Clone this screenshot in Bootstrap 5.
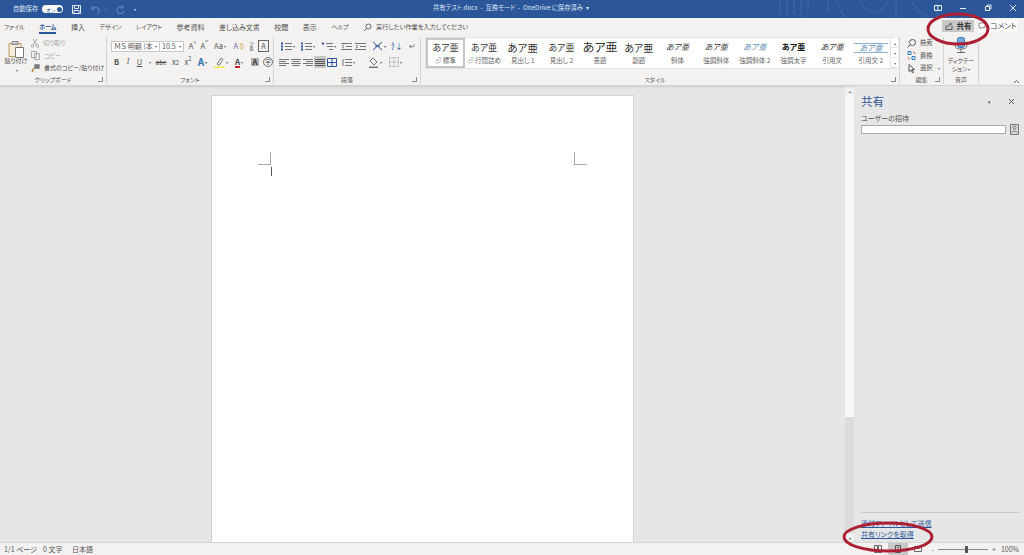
<!DOCTYPE html>
<html lang="ja">
<head>
<meta charset="UTF-8">
<title>共有テスト.docx - Word</title>
<link href="https://cdn.jsdelivr.net/npm/bootstrap@5.3.0/dist/css/bootstrap.min.css" rel="stylesheet">
<style>
html, body { height: 555px; overflow: hidden; }
body { width: 1024px; position: relative; font-family: "Noto Sans CJK JP", "Liberation Sans", sans-serif; font-feature-settings: "palt"; font-size: 7px; line-height: 1; color: #505050; background: #e6e6e6; }
svg { display: block; flex: none; }

.titlebar { height: 18px; background: #2b579a; color: #dfe7f3; font-size: 6.3px; position: relative; }
.titlebar .deco { position: absolute; left: 760px; top: 0; }
.titlebar .qat { width: 330px; padding-left: 13px; }
.autosave { width: 21px; height: 8px; border-radius: 4px; background: #fff; color: #2b579a; font-size: 5px; padding: 0 1px 0 4px; }
.autosave i { width: 5px; height: 5px; border-radius: 50%; background: #2b579a; }
.doc-title { position: absolute; left: 433px; top: 5px; white-space: nowrap; }
.win-btns { position: absolute; left: 933px; top: 3px; }
.win-btns div { width: 25px; }

.tabs { height: 18px; background: #f3f2f1; padding-left: 4px; }
.tabs span { margin-right: 14.5px; white-space: nowrap; }
.tabs .kana { font-size: 6px; }
.tabs .search-text { font-size: 6.2px; }
.tabs .active { color: #2b579a; font-weight: 700; position: relative; }
.tabs .active::after { content: ""; position: absolute; left: 0; right: 0; bottom: -4px; height: 2px; background: #2b579a; }
.btn-share { position: absolute; left: 942px; top: 20px; width: 32px; height: 12px; background: #c8c8c8; color: #333; font-weight: 700; font-size: 7.5px; white-space: nowrap; }
.btn-comment { position: absolute; left: 978px; top: 20px; width: 39px; height: 12px; background: #fff; color: #444; font-size: 7.5px; white-space: nowrap; }

.ribbon { height: 50px; background: #f3f2f1; border-bottom: 1px solid #d2d2d2; box-shadow: 0 1px 2px rgba(0,0,0,.12); position: relative; }
.rgroup { height: 47px; margin-top: 1px; border-right: 1px solid #d6d4d2; position: relative; padding-top: 3px; flex: none; }
.rgroup .glabel { position: absolute; left: 0; right: 0; bottom: 1px; text-align: center; font-size: 6px; color: #555; white-space: nowrap; }
.launcher { position: absolute; right: 3px; bottom: 2px; width: 5px; height: 5px; border-right: 1px solid #888; border-bottom: 1px solid #888; }
.irow { height: 12px; margin-bottom: 4px; align-items: center; }
.cell { display: flex; align-items: center; justify-content: center; flex: none; height: 12px; font-size: 7.5px; }
.caret { font-size: 4px; color: #666; margin-left: 1px; }
.selbox { height: 11px; background: #fff; border: 1px solid #c8c8c8; justify-content: space-between; padding: 0 2px; font-size: 7px; color: #555; }
.stack { font-size: 4.5px; line-height: 1; text-align: center; }
.muted { color: #a5a5a5; }
.clip { font-size: 6px; }
.clip-row { height: 12.5px; white-space: nowrap; }
.edit-row { height: 12.5px; white-space: nowrap; font-size: 6.3px; }

.gallery { position: absolute; left: 4px; top: 0; width: 470px; height: 32px; background: #fff; border: 1px solid #e2e2e2; }
.style-item { width: 38.7px; height: 30px; text-align: center; flex: none; padding-top: 5px; }
.style-item b { display: block; font-weight: 400; font-size: 9px; color: #333; height: 14px; white-space: nowrap; }
.style-item small { display: block; font-size: 6.5px; color: #666; white-space: nowrap; }
.style-item.sel { outline: 2px solid #c6c6c6; outline-offset: -2px; }
.gscroll { width: 8px; height: 10px; border-left: 1px solid #e2e2e2; border-bottom: 1px solid #e2e2e2; font-size: 4px; color: #666; background: #fff; }

.main { height: 456px; background: #e6e6e6; }
.doc-area { width: 845px; height: 456px; padding: 9px 0 0 211px; flex: none; overflow: hidden; }
.page { width: 423px; height: 460px; background: #fff; border: 1px solid #d4d4d4; padding: 56px 46px 0; }
.crop { width: 13px; height: 13px; border-bottom: 1px solid #a8a8a8; }
.crop.l { border-right: 1px solid #a8a8a8; }
.crop.r { border-left: 1px solid #a8a8a8; }
.caret-mark { width: 1px; height: 9px; background: #555; margin: 2px 0 0 13px; }
.vscroll { width: 9px; height: 456px; background: #dcdcdc; flex: none; }
.vscroll .thumb { height: 322px; background: #f8f8f8; }
.vscroll .arrow { height: 9px; background: #f0f0f0; color: #555; font-size: 4px; }
.pane { width: 170px; height: 456px; padding: 9px 4px 0 7px; flex: none; position: relative; background: #e6e6e6; }
.pane h2 { font-size: 11.5px; font-weight: 400; color: #2b579a; margin: 0; }
.pane .inv { height: 9px; width: 145px; background: #fff; border: 1px solid #aaa; }
.pane .foot { position: absolute; left: 7px; right: 4px; bottom: 0; border-top: 1px solid #c8c8c8; padding-top: 7px; }
.pane a { display: block; color: #2b579a; font-size: 7px; margin-bottom: 4px; }

.statusbar { height: 13px; background: #f3f2f1; border-top: 1px solid #d4d4d4; padding-left: 4px; font-size: 7px; color: #555; position: relative; }
.view-btn { width: 20px; height: 12px; }
.view-btn.on { background: #c8c8c8; }
.zoom-track { width: 50px; height: 1px; background: #888; position: relative; }
.zoom-track i { position: absolute; left: 27px; top: -3px; width: 3px; height: 7px; background: #555; }
.callouts { position: absolute; left: 0; top: 0; pointer-events: none; }
</style>
</head>
<body>

<!-- タイトルバー -->
<div class="titlebar d-flex align-items-center">
    <svg class="deco" width="200" height="18" fill="none" stroke="#34609f" stroke-width="2">
        <path d="M20 0v14M27 0v16M34 0v14M41 0v17M48 0v12M68 0v12M76 0l8 17M100 0c4 16 24 16 28 0M136 0v17M152 0c2 8 8 14 16 16M178 0c-3 8-3 12 2 18"/>
    </svg>
    <div class="qat d-flex align-items-center">
        <span class="me-1">自動保存</span>
        <span class="autosave d-flex align-items-center justify-content-between">オン<i></i></span>
        <svg class="ms-2" width="11" height="11" fill="none" stroke="#dfe7f3"><path d="M1.500 1.500h8v8h-8zM3.500 1.500v3h4v-3M3 9.500v-3h5v3"/></svg>
        <svg class="ms-2" width="11" height="11" fill="none" stroke="#5f82b6" stroke-width="1.200"><path d="M2 2v3h3M2 5c2-3 7-2 7 2 0 1-.5 2-1.500 2.500"/></svg>
        <span class="ms-1" style="color:#5f82b6;font-size:4px">▾</span>
        <svg class="ms-2" width="11" height="11" fill="none" stroke="#5f82b6" stroke-width="1.200"><path d="M8 1v3H5M8.500 4a3.500 3.500 0 1 0 .5 3"/></svg>
        <span class="ms-2" style="font-size:4px">▾</span>
    </div>
    <span class="doc-title">共有テスト.docx &nbsp;-&nbsp; 互換モード &nbsp;-&nbsp; OneDrive に保存済み &nbsp;▾</span>
    <div class="win-btns d-flex">
        <div><svg width="10" height="10" fill="none" stroke="#e8eef7"><path d="M1.500 2.500h7v5h-7zM5 2.500v5"/></svg></div>
        <div><svg width="10" height="10" stroke="#e8eef7"><path d="M2 5.500h6"/></svg></div>
        <div><svg width="10" height="10" fill="none" stroke="#e8eef7"><path d="M2.500 3.500h4v4h-4zM4 3.500v-1.500h4v4h-1.500"/></svg></div>
        <div><svg width="10" height="10" stroke="#e8eef7"><path d="M2 2l6 6M8 2l-6 6"/></svg></div>
    </div>
</div>

<!-- タブ -->
<div class="tabs d-flex align-items-center">
    <span class="kana">ファイル</span><span class="kana active">ホーム</span><span>挿入</span><span class="kana">デザイン</span><span class="kana">レイアウト</span><span>参考資料</span><span>差し込み文書</span><span>校閲</span><span>表示</span><span class="kana">ヘルプ</span>
    <svg width="9" height="9" fill="none" stroke="#666" class="me-1"><circle cx="5.500" cy="3.500" r="2.500"/><path d="M3.500 5.500L1 8"/></svg>
    <span class="search-text">実行したい作業を入力してください</span>
</div>
<div class="btn-share d-flex align-items-center justify-content-center gap-1">
    <svg width="8" height="8" fill="none" stroke="#555"><path d="M1 3.500v4h6v-4M3 5c0-2 1-3 3-3M5 .5L6.500 2 5 3.500"/></svg>共有
</div>
<div class="btn-comment d-flex align-items-center justify-content-center gap-1">
    <svg width="8" height="8" fill="none" stroke="#888"><path d="M1 1h6v4.500H4L2.500 7V5.500H1z"/></svg>コメント
</div>

<!-- リボン -->
<div class="ribbon d-flex">
    <!-- クリップボード -->
    <div class="rgroup clip d-flex" style="width:107px;padding-top:0">
        <div class="text-center" style="width:31px;padding:3px 0 0 1px;white-space:nowrap">
            <svg class="mx-auto" width="20" height="18" fill="none" stroke="#b89a62"><path d="M3 3.500h12v13H3z" fill="#f5ecd9"/><path d="M6 1.500h6v3H6z" fill="#ccc" stroke="#888"/><path d="M9.500 7.500h8v10h-8z" fill="#fff" stroke="#777"/></svg>
            <div>貼り付け</div>
            <div class="caret mt-1">▾</div>
        </div>
        <div>
            <div class="clip-row d-flex align-items-center gap-1 muted">
                <svg width="8" height="9" fill="none" stroke="#aaa"><path d="M2 0l4 6M6 0L2 6"/><circle cx="1.500" cy="7" r="1.300"/><circle cx="6.500" cy="7" r="1.300"/></svg>切り取り
            </div>
            <div class="clip-row d-flex align-items-center gap-1 muted">
                <svg width="9" height="9" fill="none" stroke="#aaa"><path d="M.5.500h5v6h-5zM3.500 2.500h5v6h-5z"/></svg>コピー
            </div>
            <div class="clip-row d-flex align-items-center gap-1">
                <svg width="9" height="9" fill="none" stroke="#b5822f" stroke-width="1.300"><path d="M1 8c1-3 2-4 4-5"/><path d="M4 1h4v3H4z" fill="#777" stroke="#777"/></svg>書式のコピー/貼り付け
            </div>
        </div>
        <div class="glabel">クリップボード</div><div class="launcher"></div>
    </div>

    <!-- フォント -->
    <div class="rgroup" style="width:167px;padding-left:4px">
        <div class="d-flex irow">
            <div class="cell selbox" style="width:49px;white-space:nowrap">ＭＳ 明朝 (本<span class="caret">▾</span></div>
            <div class="cell selbox" style="width:25px;margin-left:-1px">10.5<span class="caret">▾</span></div>
            <div class="cell" style="width:13px;margin-left:2px">A<sup>^</sup></div>
            <div class="cell" style="width:11px">A<sup>ˇ</sup></div>
            <div class="cell" style="width:20px">Aa<span class="caret">▾</span></div>
            <div class="cell" style="width:13px;color:#7a5ab0;margin-left:3px">A<span style="color:#c8a028">◊</span></div>
            <div class="cell" style="width:11px"><span class="stack">ア<br>亜</span></div>
            <div class="cell" style="width:13px"><span style="border:1px solid #666;padding:1px 2px">A</span></div>
        </div>
        <div class="d-flex irow">
            <div class="cell fw-bold" style="width:11px">B</div>
            <div class="cell fst-italic" style="width:12px;font-family:'Liberation Serif',serif">I</div>
            <div class="cell text-decoration-underline" style="width:11px">U</div>
            <div class="cell" style="width:8px"><span class="caret">▾</span></div>
            <div class="cell text-decoration-line-through" style="width:16px;font-size:6.500px">abc</div>
            <div class="cell" style="width:13px">x<sub>2</sub></div>
            <div class="cell" style="width:12px">x<sup>2</sup></div>
            <div class="cell fw-bold" style="width:17px;color:#2e75b6;font-size:10px">A<span class="caret">▾</span></div>
            <div class="cell" style="width:19px"><svg width="11" height="11" fill="none"><path d="M3 7l4-6 2 1.500-4 6z" stroke="#777"/><path d="M0 9.500h11V11H0z" fill="#f4e842"/></svg><span class="caret">▾</span></div>
            <div class="cell" style="width:18px"><span style="color:#444;font-size:8px;font-weight:700;border-bottom:2px solid #c8202c;line-height:9px">A</span><span class="caret">▾</span></div>
            <div class="cell" style="width:14px"><span style="background:#b0b0b0;color:#333;padding:0 2px;font-weight:700">A</span></div>
            <div class="cell" style="width:12px"><span style="border:1px solid #777;border-radius:50%;width:10px;height:10px;font-size:6px;display:flex;align-items:center;justify-content:center">字</span></div>
        </div>
        <div class="glabel">フォント</div><div class="launcher"></div>
    </div>

    <!-- 段落 -->
    <div class="rgroup" style="width:147px;padding-left:4px">
        <div class="d-flex irow">
            <div class="cell" style="width:20px"><svg width="11" height="9" stroke="#2b579a"><path d="M0 1.500h2M0 4.500h2M0 7.500h2" stroke-width="2"/><path d="M4 1.500h7M4 4.500h7M4 7.500h7" stroke="#777"/></svg><span class="caret">▾</span></div>
            <div class="cell" style="width:20px"><svg width="11" height="9" stroke="#2b579a"><path d="M0 1.500h2M0 4.500h2M0 7.500h2" stroke-width="2"/><path d="M4 1.500h7M4 4.500h7M4 7.500h7" stroke="#777"/></svg><span class="caret">▾</span></div>
            <div class="cell" style="width:21px"><svg width="11" height="9" stroke="#777"><path d="M0 1.500h2" stroke="#2b579a" stroke-width="2"/><path d="M4 1.500h7M5 4.500h6M7 7.500h4"/></svg><span class="caret">▾</span></div>
            <div class="cell" style="width:14px"><svg width="11" height="9" stroke="#777"><path d="M0 1.500h11M5 4.500h6M0 7.500h11M3 3L1 4.500 3 6" fill="none"/></svg></div>
            <div class="cell" style="width:15px"><svg width="11" height="9" stroke="#777"><path d="M0 1.500h11M5 4.500h6M0 7.500h11M1 3l2 1.500L1 6" fill="none"/></svg></div>
            <div class="cell" style="width:21px"><svg width="11" height="10" fill="none" stroke="#2b579a"><path d="M1 1l9 8M10 1L1 9M3 5h5"/></svg><span class="caret">▾</span></div>
            <div class="cell" style="width:16px;color:#2b579a"><span class="stack">A<br>Z</span><span style="margin-left:1px">↓</span></div>
            <div class="cell" style="width:14px;color:#666">↵</div>
        </div>
        <div class="d-flex irow">
            <div class="cell" style="width:12px"><svg width="10" height="9" stroke="#777"><path d="M0 1.500h10M0 3.500h7M0 5.500h10M0 7.500h7"/></svg></div>
            <div class="cell" style="width:12px"><svg width="10" height="9" stroke="#777"><path d="M0 1.500h10M1.500 3.500h7M0 5.500h10M1.500 7.500h7"/></svg></div>
            <div class="cell" style="width:12px"><svg width="10" height="9" stroke="#777"><path d="M0 1.500h10M3 3.500h7M0 5.500h10M3 7.500h7"/></svg></div>
            <div class="cell" style="width:12px;background:#c8c8c8"><svg width="10" height="9" stroke="#555"><path d="M0 1.500h10M0 3.500h10M0 5.500h10M0 7.500h10"/></svg></div>
            <div class="cell" style="width:12px"><svg width="10" height="9" fill="none" stroke="#2b579a"><path d="M.5.500h9v8h-9zM.5 4.500h9M5 .5v8"/></svg></div>
            <div class="cell" style="width:20px"><svg width="10" height="9" stroke="#777"><path d="M3 1.500h7M3 4.500h7M3 7.500h7M1 1v7" /></svg><span class="caret">▾</span></div>
            <div class="cell" style="width:6px"></div>
            <div class="cell" style="width:21px"><svg width="11" height="11" fill="none"><path d="M5 1l4 4-3 3-4-4z" stroke="#777"/><path d="M1 9.500h9V11H1z" fill="#777"/></svg><span class="caret">▾</span></div>
            <div class="cell" style="width:20px"><svg width="10" height="10" fill="none" stroke="#999"><path d="M.5.500h9v9h-9zM.5 5h9M5 .5v9" stroke-dasharray="1 1"/></svg><span class="caret">▾</span></div>
        </div>
        <div class="glabel">段落</div><div class="launcher"></div>
    </div>

    <!-- スタイル -->
    <div class="rgroup" style="width:479px;padding-top:0">
        <div class="gallery d-flex">
            <div class="style-item sel"><b>あア亜</b><small>⏎ 標準</small></div>
            <div class="style-item"><b>あア亜</b><small>⏎ 行間詰め</small></div>
            <div class="style-item"><b style="font-size:10.500px">あア亜</b><small>見出し 1</small></div>
            <div class="style-item"><b>あア亜</b><small>見出し 2</small></div>
            <div class="style-item" style="padding-top:3px"><b style="font-size:12px;height:16px">あア亜</b><small>表題</small></div>
            <div class="style-item"><b style="font-size:10px">あア亜</b><small>副題</small></div>
            <div class="style-item"><b class="fst-italic" style="font-size:8px">あア亜</b><small>斜体</small></div>
            <div class="style-item"><b class="fst-italic" style="font-size:8px">あア亜</b><small>強調斜体</small></div>
            <div class="style-item"><b class="fst-italic" style="font-size:8px;color:#5b8bb5">あア亜</b><small>強調斜体 2</small></div>
            <div class="style-item"><b class="fw-bold" style="font-size:8px;color:#111">あア亜</b><small>強調太字</small></div>
            <div class="style-item"><b class="fst-italic" style="font-size:8px">あア亜</b><small>引用文</small></div>
            <div class="style-item"><b class="fst-italic" style="font-size:8px;color:#5b8bb5;border-top:1px solid #8fb0cc;border-bottom:1px solid #8fb0cc;height:10px;margin:0 2px 4px">あア亜</b><small>引用文 2</small></div>
            <div>
                <div class="gscroll d-flex align-items-center justify-content-center muted">▴</div>
                <div class="gscroll d-flex align-items-center justify-content-center">▾</div>
                <div class="gscroll d-flex align-items-center justify-content-center">▾</div>
            </div>
        </div>
        <div class="glabel" style="right:10px">スタイル</div><div class="launcher"></div>
    </div>

    <!-- 編集 -->
    <div class="rgroup" style="width:44px;padding:0 0 0 7px">
        <div class="edit-row d-flex align-items-center gap-1"><svg width="9" height="9" fill="none" stroke="#555"><circle cx="5.500" cy="3.500" r="3"/><path d="M3.300 5.700L.5 8.500"/></svg>検索</div>
        <div class="edit-row d-flex align-items-center gap-1"><svg width="9" height="9" fill="none" stroke="#2b79c2"><path d="M1 .5h3v3H1zM5 5.500h3v3H5z"/><path d="M6 1c1 0 2 1 2 2M3 8C2 8 1 7 1 6" stroke="#c05050"/></svg>置換</div>
        <div class="edit-row d-flex align-items-center gap-1"><svg width="9" height="9" fill="none" stroke="#555"><path d="M2 .5v7l2-1.500 1.500 3 1-.5L5 5.500h2.500z"/></svg>選択<span class="caret">▾</span></div>
        <div class="glabel">編集</div><div class="launcher"></div>
    </div>

    <!-- 音声 -->
    <div class="rgroup text-center" style="width:35px;padding-top:0">
        <svg class="mx-auto" width="14" height="17" fill="none"><rect x="3.500" y=".5" width="7" height="10" rx="2" fill="#7aa5d8" stroke="#2b79c2"/><path d="M1 8c0 3 2 4 6 4s6-1 6-4M7 12v3M3 15.500h8" stroke="#666"/></svg>
        <div style="margin-top:3px;line-height:7.500px;font-size:6px;white-space:nowrap">ディクテー<br>ション<span class="caret">▾</span></div>
        <div class="glabel">音声</div>
    </div>
    <svg class="position-absolute" style="left:1013px;top:43px" width="7" height="5" fill="none" stroke="#666"><path d="M1 4l2.500-2.500L6 4"/></svg>
</div>

<!-- 本文 -->
<div class="main d-flex">
    <div class="doc-area">
        <div class="page">
            <div class="d-flex justify-content-between">
                <div class="crop l"></div>
                <div class="crop r"></div>
            </div>
            <div class="caret-mark"></div>
        </div>
    </div>
    <div class="vscroll d-flex flex-column">
        <div class="arrow d-flex align-items-center justify-content-center">▴</div>
        <div class="thumb"></div>
        <div class="flex-grow-1"></div>
        <div class="arrow d-flex align-items-center justify-content-center">▾</div>
    </div>
    <div class="pane">
        <div class="d-flex justify-content-between align-items-center">
            <h2>共有</h2>
            <div class="d-flex align-items-center" style="gap:17px;padding-right:5px;color:#555">
                <span style="font-size:5px">▾</span>
                <svg width="7" height="7" stroke="#555"><path d="M1 1l5 5M6 1L1 6"/></svg>
            </div>
        </div>
        <div style="margin:6px 0 2px">ユーザーの招待</div>
        <div class="d-flex align-items-center gap-1">
            <div class="inv"></div>
            <svg width="9" height="11" fill="none" stroke="#777"><path d="M.5.500h8v10h-8z" fill="#d8d8d8"/><circle cx="4.500" cy="3.500" r="1.500"/><path d="M2 8.500c0-2 5-2 5 0"/></svg>
        </div>
        <div class="foot">
            <a href="#">添付ファイルとして送信</a>
            <a href="#">共有リンクを取得</a>
        </div>
    </div>
</div>

<!-- ステータスバー -->
<div class="statusbar d-flex align-items-center">
    <span style="width:39px">1/1 ページ</span>
    <span style="width:29px">0 文字</span>
    <span>日本語</span>
    <div class="d-flex align-items-center ms-auto" style="padding-right:5px">
        <div class="view-btn d-flex align-items-center justify-content-center"><svg width="8" height="8" fill="none" stroke="#666"><path d="M.5.500h3v7h-3zM4.500.5h3v7h-3z"/></svg></div>
        <div class="view-btn on d-flex align-items-center justify-content-center"><svg width="8" height="8" fill="none" stroke="#555"><path d="M1.500.5h5v7h-5zM3 2.500h2M3 4.500h2"/></svg></div>
        <div class="view-btn d-flex align-items-center justify-content-center me-1"><svg width="8" height="8" fill="none" stroke="#666"><path d="M.5 1.500h7v5h-7zM2.500 3.500h3"/></svg></div>
        <span class="me-1">-</span>
        <div class="zoom-track"><i></i></div>
        <span class="ms-1" style="margin-right:5px">+</span>
        <span>100%</span>
    </div>
</div>

<!-- 赤丸 -->
<svg class="callouts" width="1024" height="555" fill="none" stroke="#ad1f33" stroke-width="3">
    <ellipse cx="958" cy="29" rx="30" ry="15"/>
    <ellipse cx="888" cy="537" rx="44" ry="14"/>
</svg>

<script src="https://cdn.jsdelivr.net/npm/bootstrap@5.3.0/dist/js/bootstrap.bundle.min.js"></script>
</body>
</html>
